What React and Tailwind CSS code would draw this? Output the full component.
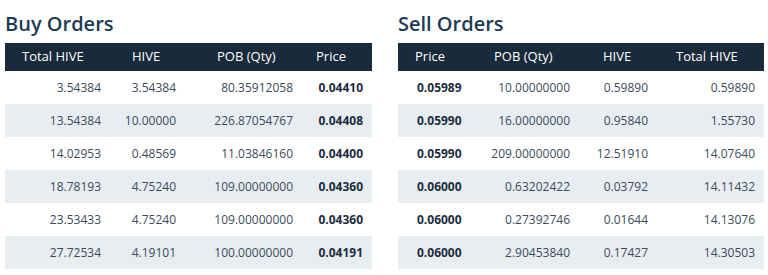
import React from "react";

const buy = [
  ["3.54384", "3.54384", "80.35912058", "0.04410"],
  ["13.54384", "10.00000", "226.87054767", "0.04408"],
  ["14.02953", "0.48569", "11.03846160", "0.04400"],
  ["18.78193", "4.75240", "109.00000000", "0.04360"],
  ["23.53433", "4.75240", "109.00000000", "0.04360"],
  ["27.72534", "4.19101", "100.00000000", "0.04191"],
];

const sell = [
  ["0.05989", "10.00000000", "0.59890", "0.59890"],
  ["0.05990", "16.00000000", "0.95840", "1.55730"],
  ["0.05990", "209.00000000", "12.51910", "14.07640"],
  ["0.06000", "0.63202422", "0.03792", "14.11432"],
  ["0.06000", "0.27392746", "0.01644", "14.13076"],
  ["0.06000", "2.90453840", "0.17427", "14.30503"],
];

function Title({ children }) {
  return (
    <div className="pt-[14px] pb-[9px] text-[20px] leading-[20px] font-semibold text-[#1d3a57]">
      {children}
    </div>
  );
}

function BuyTable() {
  return (
    <section className="w-[367px] shrink-0">
      <Title>Buy Orders</Title>
      <div className="flex h-[28px] items-center bg-[#192a3b] text-white text-[13px]">
        <div className="w-[112px] pl-[17px]">Total HIVE</div>
        <div className="w-[75px] pl-[15px]">HIVE</div>
        <div className="w-[116px] pl-[25px]">POB (Qty)</div>
        <div className="w-[64px] pl-[8px]">Price</div>
      </div>
      {buy.map((r, i) => (
        <div
          key={i}
          className={
            "flex h-[33px] items-center text-[12px] text-[#3b4b5c] " +
            (i % 2 === 1 ? "bg-[#e8edf2]" : "bg-white")
          }
        >
          <div className="w-[112px] pr-[16px] text-right">{r[0]}</div>
          <div className="w-[75px] pr-[16px] text-right">{r[1]}</div>
          <div className="w-[116px] pr-[15px] text-right">{r[2]}</div>
          <div className="w-[64px] pr-[9px] text-right font-bold text-[#1c2d3f]">{r[3]}</div>
        </div>
      ))}
    </section>
  );
}

function SellTable() {
  return (
    <section className="w-[366px] shrink-0">
      <Title>Sell Orders</Title>
      <div className="flex h-[28px] items-center bg-[#192a3b] text-white text-[13px]">
        <div className="w-[82px] pl-[17px]">Price</div>
        <div className="w-[105px] pl-[14px]">POB (Qty)</div>
        <div className="w-[78px] pl-[18px]">HIVE</div>
        <div className="w-[101px] pl-[13px]">Total HIVE</div>
      </div>
      {sell.map((r, i) => (
        <div
          key={i}
          className={
            "flex h-[33px] items-center text-[12px] text-[#3b4b5c] " +
            (i % 2 === 1 ? "bg-[#e8edf2]" : "bg-white")
          }
        >
          <div className="w-[82px] pl-[19px] font-bold text-[#1c2d3f]">{r[0]}</div>
          <div className="w-[105px] pr-[15px] text-right">{r[1]}</div>
          <div className="w-[78px] pr-[15px] text-right">{r[2]}</div>
          <div className="w-[101px] pr-[9px] text-right">{r[3]}</div>
        </div>
      ))}
    </section>
  );
}

export default function App() {
  return (
    <div
      className="w-[768px] h-[275px] bg-white flex gap-[26px] pl-[5px] overflow-hidden"
      style={{ fontFamily: '"Open Sans", "Noto Sans", sans-serif' }}
    >
      <BuyTable />
      <SellTable />
    </div>
  );
}
